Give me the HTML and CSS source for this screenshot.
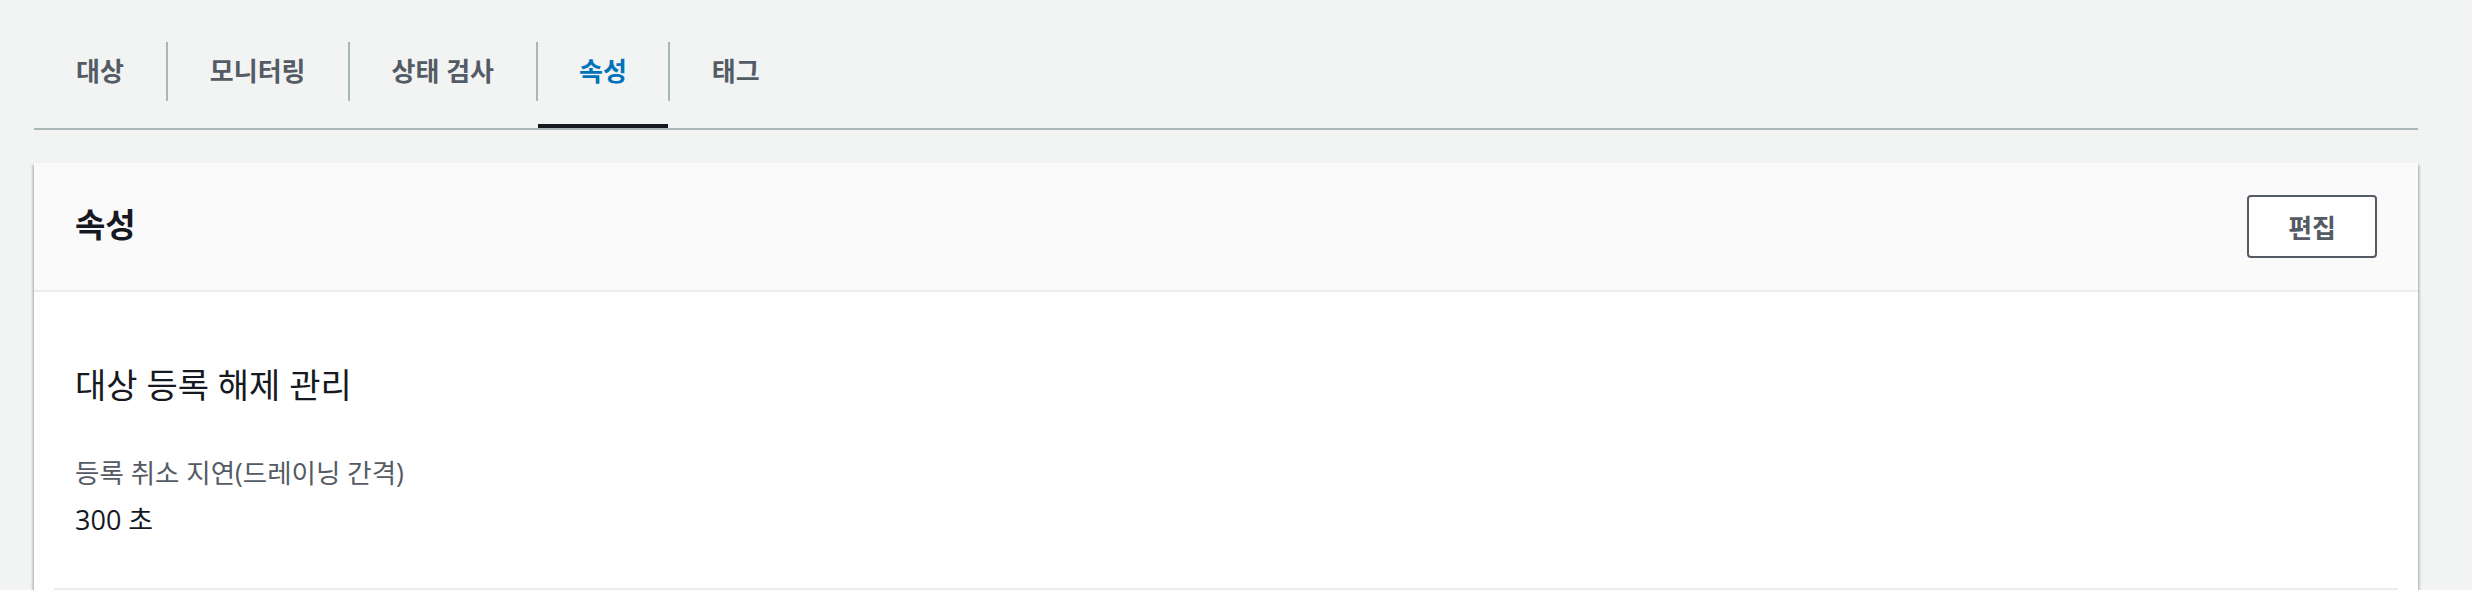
FILE: index.html
```html
<!DOCTYPE html>
<html lang="ko">
<head>
  <meta charset="UTF-8" />
  <meta name="viewport" content="width=device-width, initial-scale=1" />
  <title>대상 그룹 속성</title>
  <link rel="stylesheet" href="styles.css">
</head>
<body>
  <div class="tabs">
    <a class="tab">대상</a>
    <span class="tab-sep"></span>
    <a class="tab">모니터링</a>
    <span class="tab-sep"></span>
    <a class="tab">상태 검사</a>
    <span class="tab-sep"></span>
    <a class="tab active">속성</a>
    <span class="tab-sep"></span>
    <a class="tab">태그</a>
  </div>

  <div class="panel">
    <div class="panel-header">
      <h2>속성</h2>
      <button type="button">편집</button>
    </div>
    <div class="panel-body">
      <div class="section">
        <h3>대상 등록 해제 관리</h3>
        <div class="field-label">등록 취소 지연(드레이닝 간격)</div>
        <div class="field-value">300 초</div>
      </div>
    </div>
  </div>
</body>
</html>
```

FILE: styles.css
```css
body {
  margin: 0;
  padding: 42px 54px 0 34px;
  background: #f2f3f3;
  color: #16191f;
  font-family: "Open Sans", "Noto Sans CJK KR", sans-serif;
}
.tabs {
  display: flex;
  align-items: flex-start;
  border-bottom: 2px solid #aab7b8;
}
.tab {
  display: block;
  height: 59px;
  line-height: 59px;
  padding: 0 42px 23px;
  border-bottom: 4px solid transparent;
  font-size: 26px;
  font-weight: 700;
  color: #545b64;
  cursor: pointer;
}
.tab.active {
  padding: 0 41px 23px;
  color: #0073bb;
  border-bottom-color: #16191f;
}
.tab-sep {
  width: 2px;
  height: 59px;
  background: #aab7b8;
}
.panel {
  margin-top: 33px;
  background: #fff;
  box-shadow: 0 2px 2px rgb(0 28 36 / 0.3), 2px 2px 2px rgb(0 28 36 / 0.15), -2px 2px 2px rgb(0 28 36 / 0.15);
}
.panel-header {
  display: flex;
  align-items: center;
  justify-content: space-between;
  height: 127px;
  padding: 0 41px;
  background: #fafafa;
  border-bottom: 2px solid #eaeded;
}
.panel-header h2 {
  margin: 0;
  font-size: 33px;
  font-weight: 700;
  line-height: 44px;
  margin-top: -4px;
}
button {
  height: 63px;
  padding: 0 39px;
  background: #fff;
  border: 2px solid #545b64;
  border-radius: 4px;
  color: #545b64;
  font-family: inherit;
  font-size: 26px;
  font-weight: 700;
  cursor: pointer;
}
.panel-body {
  padding: 0 20px;
}
.section {
  padding: 71px 21px 50px;
  border-bottom: 2px solid #eaeded;
}
.section h3 {
  margin: 0 0 48px;
  font-size: 34px;
  font-weight: 400;
  line-height: 44px;
}
.field-label {
  font-size: 26.5px;
  line-height: 36px;
  color: #545b64;
  margin-bottom: 11px;
}
.field-value {
  font-size: 27px;
  line-height: 36px;
}
```
